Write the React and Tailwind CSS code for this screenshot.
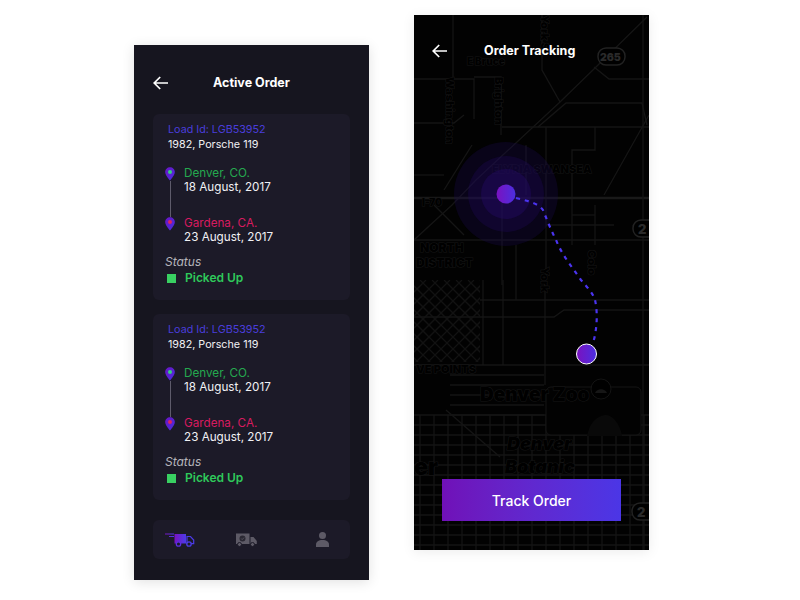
import { useId } from 'react'

const orders = [1, 2]

const Pin = ({ dot }) => {
  const id = useId()
  return (
    <svg width="10" height="14" viewBox="0 0 10 14" className="shrink-0">
      <defs>
        <linearGradient id={id} x1="0" y1="0" x2="1" y2="1">
          <stop offset="0" stopColor="#6a14c4" />
          <stop offset="1" stopColor="#4b2fe0" />
        </linearGradient>
      </defs>
      <path d="M5 0.2C2.3 0.2 0.2 2.3 0.2 5C0.2 8 3.4 11.4 5 13.6C6.6 11.4 9.8 8 9.8 5C9.8 2.3 7.7 0.2 5 0.2Z" fill={`url(#${id})`} />
      <circle cx="5" cy="5" r="2" fill={dot} />
    </svg>
  )
}

const OrderCard = () => (
  <div className="h-[186px] rounded-md bg-[#1c1a28] pl-3 pt-2">
    <p className="pl-[3px] text-[10.75px] leading-[15px] text-[#4a3ddb]">Load Id: LGB53952</p>
    <p className="pl-[3px] text-[10.75px] leading-[15px] text-[#f1f1f4]">1982, Porsche 119</p>
    <div className="mt-[14px] flex gap-[9px]">
      <div className="flex h-[65px] w-[10px] flex-col items-center pt-px">
        <Pin dot="#35d07f" />
        <div className="w-px flex-1 bg-[#5e5b6b]" />
        <Pin dot="#e0245e" />
      </div>
      <div>
        <p className="text-[11.7px] leading-[14px] text-[#25a84f]">Denver, CO.</p>
        <p className="text-[11.7px] leading-[14px] text-[#f1f1f4]">18 August, 2017</p>
        <p className="mt-[22px] text-[11.7px] leading-[14px] text-[#d81b60]">Gardena, CA.</p>
        <p className="text-[11.7px] leading-[14px] text-[#f1f1f4]">23 August, 2017</p>
      </div>
    </div>
    <p className="mt-[11px] text-[12px] italic leading-[14px] text-[#b5b4bb]">Status</p>
    <div className="mt-[2px] flex items-center gap-[9px] pl-[2px]">
      <div className="h-[9px] w-[9px] bg-[#39d062]" />
      <p className="text-[12px] font-semibold leading-[14px] text-[#2fc95b]">Picked Up</p>
    </div>
  </div>
)

const BackArrow = () => (
  <svg width="15" height="14" viewBox="0 0 15 14" fill="none" stroke="#fff" strokeWidth="1.7" className="shrink-0">
    <path d="M15 7H1.5M7.2 1L1.2 7L7.2 13" />
  </svg>
)

const FastTruck = () => (
  <svg width="30" height="14" viewBox="0 0 30 14">
    <defs>
      <linearGradient id="fast" x1="0" y1="0" x2="1" y2="0">
        <stop offset="0" stopColor="#7a12c0" />
        <stop offset="1" stopColor="#4b3be8" />
      </linearGradient>
    </defs>
    <path d="M0 0.6H9V1.6H0ZM4 3H9V4H4Z" fill="url(#fast)" />
    <path d="M9.5 1H21V10.5H9.5Z" fill="url(#fast)" />
    <path d="M22 3.5H25.5L28.7 7V10.7H22Z" fill="none" stroke="#4b3be8" strokeWidth="1.2" />
    <circle cx="13.5" cy="11" r="2.2" fill="#1c1a28" stroke="#5a2fe0" strokeWidth="1.3" />
    <circle cx="24" cy="11" r="2.2" fill="#1c1a28" stroke="#4b3be8" strokeWidth="1.3" />
  </svg>
)

const GrayTruck = () => (
  <svg width="21" height="14" viewBox="0 0 21 14" fill="#5d5a66">
    <path d="M0 0.5H13.5V11H0Z" />
    <path d="M14.5 4H17.5L20.8 8V11H14.5Z" />
    <circle cx="3.5" cy="11.5" r="2" stroke="#1c1a28" />
    <circle cx="16.5" cy="11.5" r="2" stroke="#1c1a28" />
    <circle cx="6.5" cy="5.5" r="3" fill="#2a2833" />
    <path d="M5.2 5.5L6.2 6.6L8 4.6" fill="none" stroke="#5d5a66" strokeWidth="0.8" />
  </svg>
)

const UserIcon = () => (
  <svg width="13" height="15" viewBox="0 0 13 15" fill="#5d5a66">
    <circle cx="6.5" cy="3.5" r="3.5" />
    <path d="M0 15V12.5C0 9.8 2.5 8 6.5 8C10.5 8 13 9.8 13 12.5V15Z" />
  </svg>
)

const range = (from, to, step) => {
  const out = []
  for (let v = from; v <= to; v += step) out.push(v)
  return out
}

const roads = [
  'M39 0V62', 'M0 64H60V104', 'M0 108H40L50 100', 'M60 62H87V120', 'M128 0V55L146 87',
  'M233 2L182 52L146 87L62 165L38 190L0 225', 'M180 52L195 64H235', 'M124 112L152 88H228L233 110',
  'M88 112H235', 'M181 112V135H158V175', 'M235 100L190 180', 'M132 112V260', 'M158 175V230', 'M181 190V230',
  'M132 210H200', 'M158 200H181', 'M58 130L30 175', 'M112 130V180', 'M0 160H30',
  'M0 225H235', 'M88 183V270', 'M102 230V285', 'M20 190L50 220', 'M32 395L86 442',
]

const TrackingMap = () => {
  const hatch = range(-90, 70, 12)
  return (
    <svg viewBox="0 0 235 535" width="235" height="535" className="absolute inset-0" fill="none">
      <defs>
        <linearGradient id="dot" x1="0" y1="0" x2="1" y2="0">
          <stop offset="0" stopColor="#7a12c0" />
          <stop offset="1" stopColor="#4b2fe0" />
        </linearGradient>
        <clipPath id="hatch">
          <rect x="0" y="265" width="66" height="82" />
        </clipPath>
      </defs>
      <g stroke="#151515" strokeWidth="1.3">
        {roads.map((d) => <path key={d} d={d} />)}
        {range(400, 535, 10).map((y) => <path key={y} d={`M0 ${y}H235`} />)}
        {range(6, 230, 14).map((x) => <path key={x} d={`M${x} 400V535`} />)}
        {range(360, 400, 10).map((y) => <path key={y} d={`M36 ${y}H130`} />)}
        <g clipPath="url(#hatch)" stroke="#121212">
          {hatch.map((v) => <path key={v} d={`M${v + 90} 265L${v} 355`} />)}
          {hatch.map((v) => <path key={v} d={`M${v} 265L${v + 90} 355`} />)}
        </g>
        <path d="M69 265V350M89 265V350M131 265V370M66 285H235M0 302H140L150 295H235M0 350H235" />
        <path d="M0 183H235" strokeWidth="2.4" stroke="#191919" />
        <path d="M229 0V535" />
      </g>
      <rect x="132" y="372" width="95" height="48" rx="5" fill="#020202" stroke="#151515" />
      <path d="M173 421C176 405 186 400 192 400C198 400 206 408 208 421Z" fill="#090909" />
      <rect x="184" y="33" width="27" height="17" rx="8" fill="#000" stroke="#222" strokeWidth="1.5" />
      <rect x="219" y="205" width="24" height="17" rx="8" fill="#000" stroke="#222" strokeWidth="1.5" />
      <rect x="218" y="488" width="24" height="17" rx="8" fill="#000" stroke="#222" strokeWidth="1.5" />
      <circle cx="187" cy="374" r="10" fill="#000" stroke="#141414" />
      <path d="M181 378C183 373 191 373 193 378Z" fill="#161616" />
      <g fill="#000" stroke="#161616" strokeWidth="1" fontFamily="Inter, sans-serif" fontWeight="900" style={{ paintOrder: 'stroke' }}>
        <text x="53" y="50" fontSize="10">E Bruce</text>
        <text x="186" y="46" fontSize="10.5" fill="#2a2a2a" stroke="none">265</text>
        <text x="78" y="158" fontSize="11">ELYRIA SWANSEA</text>
        <text x="8" y="191" fontSize="10">I-70</text>
        <text x="6" y="237" fontSize="12">NORTH</text>
        <text x="2" y="252" fontSize="12">DISTRICT</text>
        <text x="2" y="358" fontSize="11">VE POINTS</text>
        <text x="66" y="386" fontSize="19">Denver Zoo</text>
        <text x="93" y="435" fontSize="18" fontStyle="italic">Denver</text>
        <text x="91" y="458" fontSize="18" fontStyle="italic">Botanic</text>
        <text x="0" y="460" fontSize="23">er</text>
        <text x="223" y="502" fontSize="13" fill="#2a2a2a" stroke="none">2</text>
        <text x="224" y="219" fontSize="13" fill="#2a2a2a" stroke="none">2</text>
        <text transform="translate(32 62) rotate(90)" fontSize="11">Washington</text>
        <text transform="translate(81 62) rotate(90)" fontSize="11">Brighton</text>
        <text transform="translate(127 0) rotate(90)" fontSize="11">York St</text>
        <text transform="translate(127 252) rotate(90)" fontSize="11">York</text>
        <text transform="translate(174 235) rotate(90)" fontSize="11">Colo</text>
      </g>
      <circle cx="92" cy="179" r="52" fill="#1c0a50" fillOpacity="0.3" />
      <circle cx="92" cy="179" r="38" fill="#220a60" fillOpacity="0.3" />
      <circle cx="92" cy="179" r="25" fill="#280c70" fillOpacity="0.35" />
      <path d="M102 183C115 186 125 189 129 195C133 205 137 215 142 225C148 240 158 252 167 265C174 273 180 280 181 285C184 298 183 315 179 328" stroke="#4b34f0" strokeWidth="2.2" strokeDasharray="4 5" />
      <circle cx="92" cy="179" r="9.5" fill="url(#dot)" />
      <circle cx="172.5" cy="339" r="10" fill="url(#dot)" stroke="#fff" strokeWidth="1" />
    </svg>
  )
}

export default function App() {
  return (
    <div className="flex h-[600px] w-[800px] items-start gap-[45px] bg-white pl-[134px] font-['Inter',sans-serif]">
      <div className="mt-[45px] h-[535px] w-[235px] bg-[#16151f] px-[19px] pt-[30px] shadow-[0_2px_12px_rgba(0,0,0,0.12)]">
        <div className="flex h-4 items-center">
          <BackArrow />
          <h1 className="ml-[45px] text-[12.5px] font-bold leading-none text-white">Active Order</h1>
        </div>
        <div className="mt-[23px] flex flex-col gap-[14px]">
          {orders.map((o) => <OrderCard key={o} />)}
        </div>
        <div className="mt-5 flex h-[39px] items-center rounded-md bg-[#1c1a28] pl-3 pr-[21px]">
          <FastTruck />
          <div className="ml-[41px]"><GrayTruck /></div>
          <div className="ml-auto"><UserIcon /></div>
        </div>
      </div>
      <div className="relative mt-[15px] flex h-[535px] w-[235px] flex-col overflow-hidden bg-[#020202] shadow-[0_2px_12px_rgba(0,0,0,0.08)]">
        <TrackingMap />
        <div className="relative mt-[28px] flex h-4 items-center pl-[18px]">
          <BackArrow />
          <h1 className="ml-[37px] text-[12.5px] font-bold leading-none text-white">Order Tracking</h1>
        </div>
        <button className="relative mb-[29px] ml-[28px] mt-auto h-[42px] w-[179px] bg-gradient-to-r from-[#7010b8] to-[#4b36e6] text-[14px] font-medium text-white">
          Track Order
        </button>
      </div>
    </div>
  )
}
